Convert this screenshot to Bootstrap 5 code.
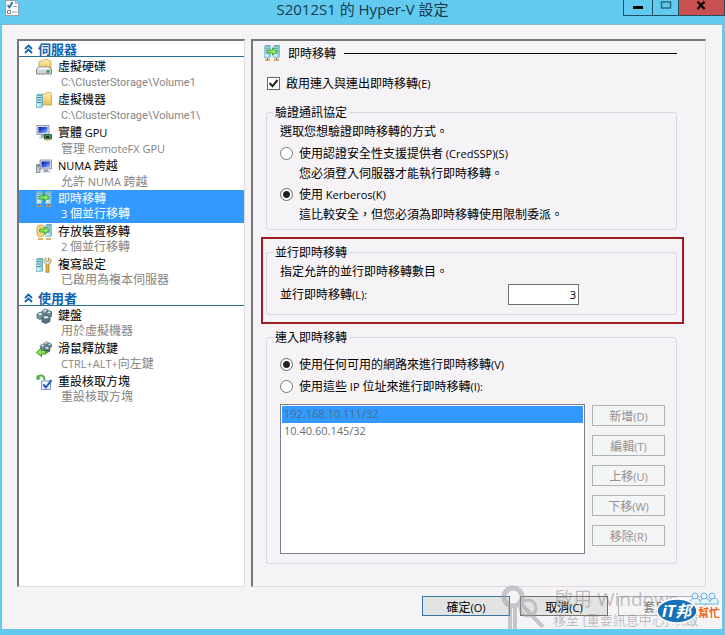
<!DOCTYPE html>
<html lang="zh-Hant">
<head>
<meta charset="utf-8">
<meta name="viewport" content="width=device-width, initial-scale=1">
<title>S2012S1 的 Hyper-V 設定</title>
<link href="https://cdn.jsdelivr.net/npm/bootstrap@5.3.0/dist/css/bootstrap.min.css" rel="stylesheet">
<style>
:root{--sky:#62caee;--face:#f6f3f7;--pick:#3399ff;--rule:#d5dae2}
body{background:var(--sky);color:#000;font:12px/16px "Noto Sans CJK TC",sans-serif}
.en{font-family:"Open Sans",sans-serif;font-size:11px}
.path{font-family:Roboto,sans-serif;font-size:11px}
.titlebar{height:24px;display:grid;grid-template-columns:1fr auto 1fr}
.titlebar h1{font:15px/19px "Open Sans","Noto Sans CJK TC",sans-serif;color:#123a4d;margin:0}
.caption{height:16px;border:1px solid #1f4f63;border-top:0;border-right:0;background:var(--sky);padding:0;width:29px;display:flex;justify-content:center}
.caption.close-it{background:#c75050;width:47px;border-right:1px solid #1f4f63}
.caption.max-it{width:26px}
.client{background:var(--face);border-top:1px solid #8db4c4;margin:0 3px 6px 2px;padding:14px 16px 13px 15px}
.panes{gap:6px}
.sunken{border:1px solid #dddbe0;border-top:2px solid #77757a;border-left:2px solid #77757a}
.side{width:228px;flex:none;background:#fff;padding-bottom:4px}
.side h2{font-size:13px;font-weight:700;line-height:15px;color:#0d62b5;border-bottom:1px solid #2a6d94;margin:0 0 1px;padding-left:1px;gap:5px}
.side h2 svg{width:9px;height:10px}
.entry{display:flex;color:#000;text-decoration:none;padding-left:17px;height:33px;gap:6px}
.entry svg{margin-top:1px}
.entry b{font-weight:400;display:block;line-height:15px}
.entry small{display:block;font-size:12px;line-height:16px;color:#858585;padding-left:3px}
.entry.on{background:var(--pick);color:#fff}.entry.on small{color:#fff}
.group-end{margin-bottom:1px}
.main{padding:2px 28px 22px 13px}
.ico{width:16px;height:16px;flex:none}
.headline{height:20px;gap:8px;margin-left:-2px}
.headline hr{opacity:1;border-color:#000;margin:0;color:#000}
.tick{height:20px;gap:6px;margin:10px 0 11px 1px}
.form-check-input{margin:0;flex:none;width:13px;height:13px;border:1px solid #77777a;background-color:#fff;float:none}
.form-check-input[type=checkbox]{border-radius:0}
.form-check-input:checked{background-color:#fff;border-color:#666}
.form-check-input:checked[type=radio]{background-image:radial-gradient(circle,#222 0 3px,transparent 4px)}
.form-check-input:checked[type=checkbox]{background-image:url("data:image/svg+xml,%3Csvg xmlns='http://www.w3.org/2000/svg' viewBox='0 0 11 11'%3E%3Cpath d='M1.5 5l3 3.200L9.500 2' fill='none' stroke='%23222' stroke-width='2'/%3E%3C/svg%3E")}
.frame{border:1px solid var(--rule);border-radius:3px;padding:0 11px 5px 13px}
.frame>legend{float:none;width:auto;font-size:12px;line-height:16px;margin:0 0 0 -7px;padding:0 2px}
.frame p{margin:0;line-height:22px}
.opt{height:22px;gap:6px}
.frame .hint{line-height:18px;margin:0 0 1px 19px}
.marked{border:2px solid #a01c24;padding:5px 5px 7px 3px;margin:7px -7px 5px -5px}
.marked .frame{padding-bottom:9px}
.setting{margin-top:2px}
.count{width:71px;height:21px;border:1px solid #707075;border-radius:0;background:#fff;text-align:right;padding:0 2px;margin-right:86px;color:#000}
.incoming{padding-bottom:9px}
.incoming legend+.opt{margin-top:8px}
.pool{margin-top:7px;gap:7px}
.iplist{flex:1;min-width:0;height:150px;border:1px solid #7b808a;border-radius:0;background:#fff;padding:1px;overflow:hidden;opacity:1;font:11px/17px "Open Sans",sans-serif;outline:0}
.iplist option{padding:0 2px;min-height:17px;line-height:17px;color:#6d6d6d}
.iplist option:checked{background:linear-gradient(var(--pick),var(--pick));color:#486c91}
.btn.flat{font-size:12px;line-height:17px;padding:1px;border-radius:0;width:73px;height:21px;border:1px solid #adb2b5;background:#f4f5f5;color:#949094;opacity:1}
.pool .d-grid{gap:9px;padding-top:1px;align-content:start}
.foot{gap:10px;margin-top:9px}
.foot .btn.flat{width:88px;height:20px;color:#000;border-color:#707070;background:#e2e4e4}
.foot .btn.first{border-color:#3873a0}
.foot .btn:disabled{background:#f4f4f5;border-color:#b4b4b8;color:#838387}
.stamp{position:absolute;right:0;bottom:0;width:225px;height:45px;pointer-events:none}
</style>
<script src="https://cdn.jsdelivr.net/npm/bootstrap@5.3.0/dist/js/bootstrap.bundle.min.js"></script>
</head>
<body>
<svg width="0" height="0" class="position-absolute" aria-hidden="true">
 <defs>
  <linearGradient id="scr" x1="0" y1="0" x2="1" y2="1"><stop offset="0" stop-color="#0714a0"/><stop offset=".5" stop-color="#3a5ce0"/><stop offset="1" stop-color="#a8c4ff"/></linearGradient>
  <linearGradient id="fold" x1="0" y1="0" x2="0" y2="1"><stop offset="0" stop-color="#fff0b0"/><stop offset="1" stop-color="#e8bf55"/></linearGradient>
  <symbol id="rack" viewBox="0 0 7 14"><path d="M0 1.500L1.500 0H7V12.500L5.500 14H0z" fill="#6fb0c0"/><path d="M.5 2H5.500V13.500H.5z" fill="#b4e2eb"/><path d="M1 3.500h4M1 6h4M1 8.500h4" stroke="#2f7184" stroke-width=".8"/><path d="M1 11h2" stroke="#fff"/></symbol>
  <symbol id="arrow" viewBox="0 0 10 8"><path d="M.7 2.700H5V.7L9.300 4 5 7.300V5.300H.7z" fill="#98ea62" stroke="#2f9d33" stroke-width=".8"/></symbol>
  <symbol id="cubes" viewBox="0 0 16 16"><g stroke="#36545c" stroke-width=".7"><path d="M6 3l3-2 3 1v4L9 7 6 6z" fill="#7d9ca6"/><path d="M10 4l3-1.500L16 4v4l-3 1.500-3-1z" fill="#688993"/><path d="M1 6l3-2 3.500 1.500V10L4 11.500 1 10z" fill="#7a99a3"/><path d="M6 9l4-2 4 2v4.500l-4 2-4-1.500z" fill="#54737d"/></g><path d="M1.700 6.200L4 4.800l2.700 1L4.300 7zM6.800 9.300L10 7.800l3.200 1.500L10 10.700zM6.600 3L9 1.500l2.300.8L9 3.700zM11 4.200l2-1 2 1-2 1z" fill="#e0eef1"/></symbol>
  <symbol id="i-disk" viewBox="0 0 16 16"><path d="M3 3l1-1h3l1-1.500h4L13 2h2v9H3z" fill="url(#fold)" stroke="#c49635" stroke-width=".7"/><path d="M2.500 8h10l3 2.500V15H.5v-4.500z" fill="#d2d6da" stroke="#686c73" stroke-width=".8"/><path d="M2.800 8.600h9.500l2 1.700H1.500z" fill="#fafafa"/><path d="M10.500 12.500h3" stroke="#229337" stroke-width="2.400"/></symbol>
  <symbol id="i-vm" viewBox="0 0 16 16"><path d="M5.500 3l1-1h3l1-1.500h4L15.500 2v11h-10z" fill="url(#fold)" stroke="#c49635" stroke-width=".7"/><use href="#rack" y="2" width="7" height="14"/></symbol>
  <symbol id="i-gpu" viewBox="0 0 16 16"><path d="M1 .5h12v9H1z" fill="#dbe0ea" stroke="#7780a0" stroke-width=".8"/><path d="M2.500 2h9v6h-9z" fill="url(#scr)"/><path d="M5 10h4v2H5zM3 12.200h7v1H3z" fill="#9ba2b2"/><path d="M8.500 9.500h7V14h-7z" fill="#3f9357" stroke="#1c5432" stroke-width=".8"/><path d="M10 11h3v2h-3z" fill="#13331e"/><path d="M9 15h5" stroke="#cca43c"/></symbol>
  <symbol id="i-numa" viewBox="0 0 16 16"><path d="M4 2h11.500v9H4z" fill="#dbe0ea" stroke="#7780a0" stroke-width=".8"/><path d="M5.500 3.500h8.500v6H5.500z" fill="url(#scr)"/><path d="M8 11.500h4v1.700H8zM6.500 13.200h8v1h-8z" fill="#9ba2b2"/><path d="M.5 6.500h3.500v8H.5z" fill="#c8ccd4" stroke="#747a88" stroke-width=".8"/><path d="M1.200 8h2" stroke="#3b444f"/></symbol>
  <symbol id="i-move" viewBox="0 0 16 16"><use href="#rack" width="7" height="13"/><use href="#rack" x="9" width="7" height="13"/><path d="M1 15h5M10 15h5" stroke="#d49a35" stroke-width="1.600"/><path d="M3.500 13v2M12.500 13v2" stroke="#7b7c56"/><use href="#arrow" x="3" y="2" width="11" height="9"/></symbol>
  <symbol id="i-store" viewBox="0 0 16 16"><path d="M1 3.500C1 .3 8 .3 8 3.500v7C8 13.500 1 13.500 1 10.500z" fill="#f4d981" stroke="#c59a3d" stroke-width=".8"/><use href="#rack" x="9" width="7" height="13"/><path d="M2 15h5M10 15h5" stroke="#d49a35" stroke-width="1.600"/><use href="#arrow" x="3" y="2" width="11" height="9"/></symbol>
  <symbol id="i-tool" viewBox="0 0 16 16"><use href="#rack" y="1" width="7" height="14"/><path d="M10 15.300V7.500L8 5V2.500L10 1v3h2.500V1l2.500 1.500V5L13 7.500v7.800z" fill="#e8b83b" stroke="#8a762f" stroke-width=".7"/><path d="M10.200 7L8.300 4.800V2.600l1.500-1V4.500h3.100V1.600l1.600 1V4.800L12.600 7z" fill="#d8dce0"/></symbol>
  <symbol id="i-mouse" viewBox="0 0 16 16"><use href="#cubes" x="3" y="0" width="13" height="12"/><path d="M.5 11.500L5.500 7v2.500H10V13H5.500v2.500z" fill="#8be24f" stroke="#23881f" stroke-width=".9"/></symbol>
  <symbol id="i-reset" viewBox="0 0 16 16"><path d="M2 2.500Q8-.5 8.500 6" fill="none" stroke="#4eaa48" stroke-width="2"/><path d="M.5 1v5L5 5z" fill="#4eaa48"/><path d="M5.500 7h9v8.500h-9z" fill="#eef5ff" stroke="#6e96cd"/><path d="M7.300 10.500l2.500 3L15.500 6" fill="none" stroke="#2354bb" stroke-width="2"/></symbol>
  <symbol id="i-up" viewBox="0 0 9 10"><path d="M1 5l3.500-3.500L8 5M1 9l3.500-3.500L8 9" fill="none" stroke="#0d62b5" stroke-width="1.800"/></symbol>
 </defs>
</svg>

<div class="position-relative">
<header class="titlebar">
 <svg class="ico mt-0 ms-1" viewBox="0 0 16 16" aria-hidden="true"><path d="M1.500.5h10l3 3v12h-13z" fill="#fafafa" stroke="#8a9298" stroke-width=".8"/><path d="M11.500.5v3h3" fill="#d5dade" stroke="#8a9298" stroke-width=".6"/><path d="M3.500 5l2 2.500L8.500 2" fill="none" stroke="#246db0" stroke-width="1.700"/><path d="M9 6.500h4M8 12h5" stroke="#9aa4ab"/><path d="M3.500 10.500h3v3h-3z" fill="#fff" stroke="#748087"/></svg>
 <h1>S2012S1 的 Hyper-V 設定</h1>
 <div class="d-flex justify-content-end">
  <button class="caption" type="button" aria-label="最小化"><svg width="28" height="15"><path d="M9 7.500h10" stroke="#000" stroke-width="3"/></svg></button>
  <button class="caption max-it" type="button" aria-label="最大化"><svg width="25" height="15"><path d="M8.500 2h9v6h-9z" fill="none" stroke="#2b697f" stroke-width="1.500"/></svg></button>
  <button class="caption close-it" type="button" aria-label="關閉"><svg width="45" height="15"><path d="M18.500 1.500l7 7.500M25.500 1.500l-7 7.500" stroke="#140808" stroke-width="2.400"/></svg></button>
 </div>
</header>

<main class="client">
 <div class="panes d-flex">
  <nav class="side sunken">
   <h2 class="d-flex align-items-center"><svg class="ms-1"><use href="#i-up"/></svg>伺服器</h2>
   <div class="group-end">
    <a class="entry" href="#"><svg class="ico"><use href="#i-disk"/></svg><span><b>虛擬硬碟</b><small><span class="path">C:\ClusterStorage\Volume1</span></small></span></a>
    <a class="entry" href="#"><svg class="ico"><use href="#i-vm"/></svg><span><b>虛擬機器</b><small><span class="path">C:\ClusterStorage\Volume1\</span></small></span></a>
    <a class="entry" href="#"><svg class="ico"><use href="#i-gpu"/></svg><span><b>實體 <span class="en">GPU</span></b><small>管理 <span class="en">RemoteFX GPU</span></small></span></a>
    <a class="entry" href="#"><svg class="ico"><use href="#i-numa"/></svg><span><b><span class="en">NUMA</span> 跨越</b><small>允許 <span class="en">NUMA</span> 跨越</small></span></a>
    <a class="entry on" href="#" aria-current="page"><svg class="ico"><use href="#i-move"/></svg><span><b>即時移轉</b><small><span class="en">3</span> 個並行移轉</small></span></a>
    <a class="entry" href="#"><svg class="ico"><use href="#i-store"/></svg><span><b>存放裝置移轉</b><small><span class="en">2</span> 個並行移轉</small></span></a>
    <a class="entry" href="#"><svg class="ico"><use href="#i-tool"/></svg><span><b>複寫設定</b><small>已啟用為複本伺服器</small></span></a>
   </div>
   <h2 class="d-flex align-items-center"><svg class="ms-1"><use href="#i-up"/></svg>使用者</h2>
   <a class="entry" href="#"><svg class="ico"><use href="#cubes"/></svg><span><b>鍵盤</b><small>用於虛擬機器</small></span></a>
   <a class="entry" href="#"><svg class="ico"><use href="#i-mouse"/></svg><span><b>滑鼠釋放鍵</b><small><span class="en">CTRL+ALT+</span>向左鍵</small></span></a>
   <a class="entry" href="#"><svg class="ico"><use href="#i-reset"/></svg><span><b>重設核取方塊</b><small>重設核取方塊</small></span></a>
  </nav>

  <section class="main sunken flex-grow-1">
   <div class="headline d-flex align-items-center"><svg class="ico"><use href="#i-move"/></svg><span>即時移轉</span><hr class="flex-grow-1"></div>
   <div class="tick d-flex align-items-center"><input class="form-check-input" type="checkbox" id="enable" checked><label for="enable">啟用連入與連出即時移轉<span class="en">(E)</span></label></div>

   <fieldset class="frame">
    <legend>驗證通訊協定</legend>
    <p>選取您想驗證即時移轉的方式。</p>
    <div class="opt d-flex align-items-center"><input class="form-check-input" type="radio" name="auth" id="cred"><label for="cred">使用認證安全性支援提供者<span class="en"> (CredSSP)(S)</span></label></div>
    <p class="hint">您必須登入伺服器才能執行即時移轉。</p>
    <div class="opt d-flex align-items-center"><input class="form-check-input" type="radio" name="auth" id="kerb" checked><label for="kerb">使用<span class="en"> Kerberos(K)</span></label></div>
    <p class="hint">這比較安全，但您必須為即時移轉使用限制委派。</p>
   </fieldset>

   <div class="marked">
    <fieldset class="frame">
     <legend>並行即時移轉</legend>
     <p>指定允許的並行即時移轉數目。</p>
     <div class="setting d-flex justify-content-between align-items-center"><label for="count">並行即時移轉<span class="en">(L):</span></label><input class="count en" id="count" type="text" value="3"></div>
    </fieldset>
   </div>

   <fieldset class="frame incoming">
    <legend>連入即時移轉</legend>
    <div class="opt d-flex align-items-center"><input class="form-check-input" type="radio" name="net" id="any" checked><label for="any">使用任何可用的網路來進行即時移轉<span class="en">(V)</span></label></div>
    <div class="opt d-flex align-items-center"><input class="form-check-input" type="radio" name="net" id="these"><label for="these">使用這些<span class="en"> IP </span>位址來進行即時移轉<span class="en">(I):</span></label></div>
    <div class="pool d-flex">
     <select class="iplist" size="8" disabled aria-label="IP 位址"><option selected>192.168.10.111/32</option><option>10.40.60.145/32</option></select>
     <div class="d-grid">
      <button class="btn flat" type="button" disabled>新增<span class="en">(D)</span></button>
      <button class="btn flat" type="button" disabled>編輯<span class="en">(T)</span></button>
      <button class="btn flat" type="button" disabled>上移<span class="en">(U)</span></button>
      <button class="btn flat" type="button" disabled>下移<span class="en">(W)</span></button>
      <button class="btn flat" type="button" disabled>移除<span class="en">(R)</span></button>
     </div>
    </div>
   </fieldset>
  </section>
 </div>
 <div class="foot d-flex justify-content-end">
  <button class="btn flat first" type="button">確定<span class="en">(O)</span></button>
  <button class="btn flat" type="button">取消<span class="en">(C)</span></button>
  <button class="btn flat" type="button" disabled>套用<span class="en">(A)</span></button>
 </div>
</main>

<svg class="stamp" viewBox="0 0 225 45" aria-hidden="true">
 <g opacity=".5" fill="none" stroke="#98989c">
  <circle cx="13" cy="13" r="9" stroke-width="5"/>
  <path d="M10 21v24M15 21v24M21 20l22 23" stroke-width="4"/>
  <circle cx="28" cy="24" r="8" stroke-width="3"/>
 </g>
 <g fill="#77777c" fill-opacity=".45" font-family="'Open Sans','Noto Sans CJK TC',sans-serif">
  <text x="54" y="22" font-size="19">啟用 Windows</text>
  <text x="53" y="41" font-size="13">移至 [重要訊息中心] 以啟</text>
 </g>
 <g fill="#e6f5fc" stroke="#6fb0dc"><path d="M190 20q0-6 5-6t5 4q1-4 5-4t5 4q0-4 4-4 5 0 4 6z"/><circle cx="195" cy="12" r="3"/><circle cx="204" cy="12" r="3"/><circle cx="212" cy="12" r="3"/></g>
 <ellipse cx="177" cy="27" rx="20" ry="12" fill="#1a71b5" stroke="#fff" stroke-width="1.500"/>
 <g font-family="'Open Sans','Noto Sans CJK TC',sans-serif" font-weight="700" font-style="italic"><text x="162" y="33" font-size="16" fill="#fff">iT邦</text></g>
 <g font-family="'Noto Sans CJK TC',sans-serif" font-weight="700"><text x="198" y="33" font-size="11" fill="#e9641d" stroke="#fff" stroke-width="2" paint-order="stroke">幫忙</text></g>
</svg>
</div>
</body>
</html>
